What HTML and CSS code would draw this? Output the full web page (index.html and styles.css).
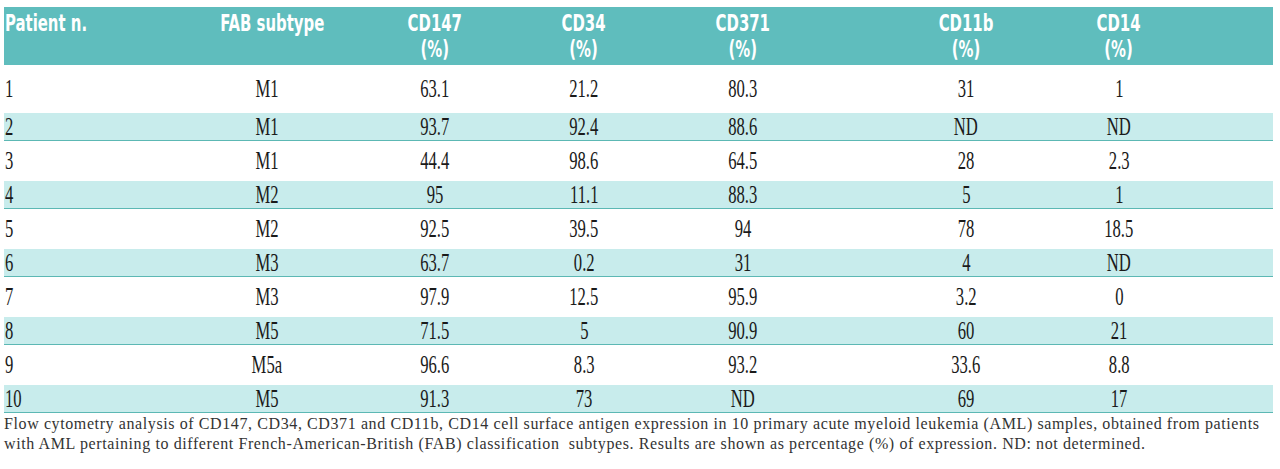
FILE: index.html
```html
<!DOCTYPE html>
<html lang="en">
<head>
<meta charset="utf-8">
<title>CD147 expression in AML samples</title>
<link rel="stylesheet" href="styles.css">
</head>
<body>
<div class="page">
  <table class="data">
    <colgroup>
      <col class="c1"><col class="c2"><col class="c3"><col class="c4"><col class="c5"><col class="c6"><col class="c7"><col class="c8">
    </colgroup>
    <thead>
      <tr>
        <th class="left"><span>Patient n.</span></th>
        <th><span>FAB subtype</span></th>
        <th><span>CD147<br>(%)</span></th>
        <th><span>CD34<br>(%)</span></th>
        <th><span>CD371<br>(%)</span></th>
        <th><span>CD11b<br>(%)</span></th>
        <th><span>CD14<br>(%)</span></th>
        <th></th>
      </tr>
    </thead>
    <tbody>
      <tr class="first"><td class="left"><span>1</span></td><td><span>M1</span></td><td><span>63.1</span></td><td><span>21.2</span></td><td><span>80.3</span></td><td><span>31</span></td><td><span>1</span></td><td></td></tr>
      <tr class="band"><td class="left"><span>2</span></td><td><span>M1</span></td><td><span>93.7</span></td><td><span>92.4</span></td><td><span>88.6</span></td><td><span>ND</span></td><td><span>ND</span></td><td></td></tr>
      <tr><td class="left"><span>3</span></td><td><span>M1</span></td><td><span>44.4</span></td><td><span>98.6</span></td><td><span>64.5</span></td><td><span>28</span></td><td><span>2.3</span></td><td></td></tr>
      <tr class="band"><td class="left"><span>4</span></td><td><span>M2</span></td><td><span>95</span></td><td><span>11.1</span></td><td><span>88.3</span></td><td><span>5</span></td><td><span>1</span></td><td></td></tr>
      <tr><td class="left"><span>5</span></td><td><span>M2</span></td><td><span>92.5</span></td><td><span>39.5</span></td><td><span>94</span></td><td><span>78</span></td><td><span>18.5</span></td><td></td></tr>
      <tr class="band"><td class="left"><span>6</span></td><td><span>M3</span></td><td><span>63.7</span></td><td><span>0.2</span></td><td><span>31</span></td><td><span>4</span></td><td><span>ND</span></td><td></td></tr>
      <tr><td class="left"><span>7</span></td><td><span>M3</span></td><td><span>97.9</span></td><td><span>12.5</span></td><td><span>95.9</span></td><td><span>3.2</span></td><td><span>0</span></td><td></td></tr>
      <tr class="band"><td class="left"><span>8</span></td><td><span>M5</span></td><td><span>71.5</span></td><td><span>5</span></td><td><span>90.9</span></td><td><span>60</span></td><td><span>21</span></td><td></td></tr>
      <tr><td class="left"><span>9</span></td><td><span>M5a</span></td><td><span>96.6</span></td><td><span>8.3</span></td><td><span>93.2</span></td><td><span>33.6</span></td><td><span>8.8</span></td><td></td></tr>
      <tr class="band"><td class="left"><span>10</span></td><td><span>M5</span></td><td><span>91.3</span></td><td><span>73</span></td><td><span>ND</span></td><td><span>69</span></td><td><span>17</span></td><td></td></tr>
    </tbody>
  </table>
  <p class="caption">Flow cytometry analysis of CD147, CD34, CD371 and CD11b, CD14 cell surface antigen expression in 10 primary acute myeloid leukemia (AML) samples, obtained from patients<br>with AML pertaining to different French-American-British (FAB) classification&nbsp; subtypes. Results are shown as percentage (%) of expression. ND: not determined.</p>
</div>
</body>
</html>
```

FILE: styles.css
```css
html, body {
  margin: 0;
  padding: 0;
  background: #ffffff;
}

.page {
  width: 1269px;
  padding: 7px 0 0 4px;
}

.data {
  width: 1269px;
  border-collapse: collapse;
  table-layout: fixed;
  font-family: "Liberation Serif", "Times New Roman", serif;
  font-size: 26px;
  color: #1a1a1a;
}

.c1 { width: 196px; }
.c2 { width: 134px; }
.c3 { width: 202px; }
.c4 { width: 96px; }
.c5 { width: 222px; }
.c6 { width: 224px; }
.c7 { width: 82px; }
.c8 { width: 113px; }

.data th {
  background: #5fbdbd;
  color: #ffffff;
  font-family: "DejaVu Sans Condensed", "Liberation Sans Narrow", "Liberation Sans", sans-serif;
  font-weight: bold;
  font-size: 23px;
  line-height: 26px;
  height: 58px;
  padding: 3px 0 0;
  box-sizing: border-box;
  vertical-align: top;
  text-align: center;
  white-space: nowrap;
}

.data th span {
  display: inline-block;
  transform: scaleX(0.72);
  transform-origin: 50% 0;
}

.data th.left span {
  transform-origin: 0 0;
}

.data td {
  text-align: center;
  padding: 0;
  height: 40px;
  line-height: 20px;
  vertical-align: middle;
  white-space: nowrap;
}

.data td span {
  display: inline-block;
  transform: scaleX(0.64);
  transform-origin: 50% 50%;
}

.data .left {
  text-align: left;
  padding-left: 1px;
}

.data td.left span {
  transform-origin: 0 50%;
}

.data tr.first td {
  height: 48px;
}

.data tr.band td {
  background: #c8ecec;
  height: 27px;
  border-bottom: 1px solid #5cb8b4;
}

.caption {
  margin: 0;
  padding-top: 1px;
  font-family: "Liberation Serif", "Times New Roman", serif;
  font-size: 16px;
  line-height: 20px;
  color: #333333;
  letter-spacing: 0.6px;
  white-space: nowrap;
  width: 1269px;
}
```
